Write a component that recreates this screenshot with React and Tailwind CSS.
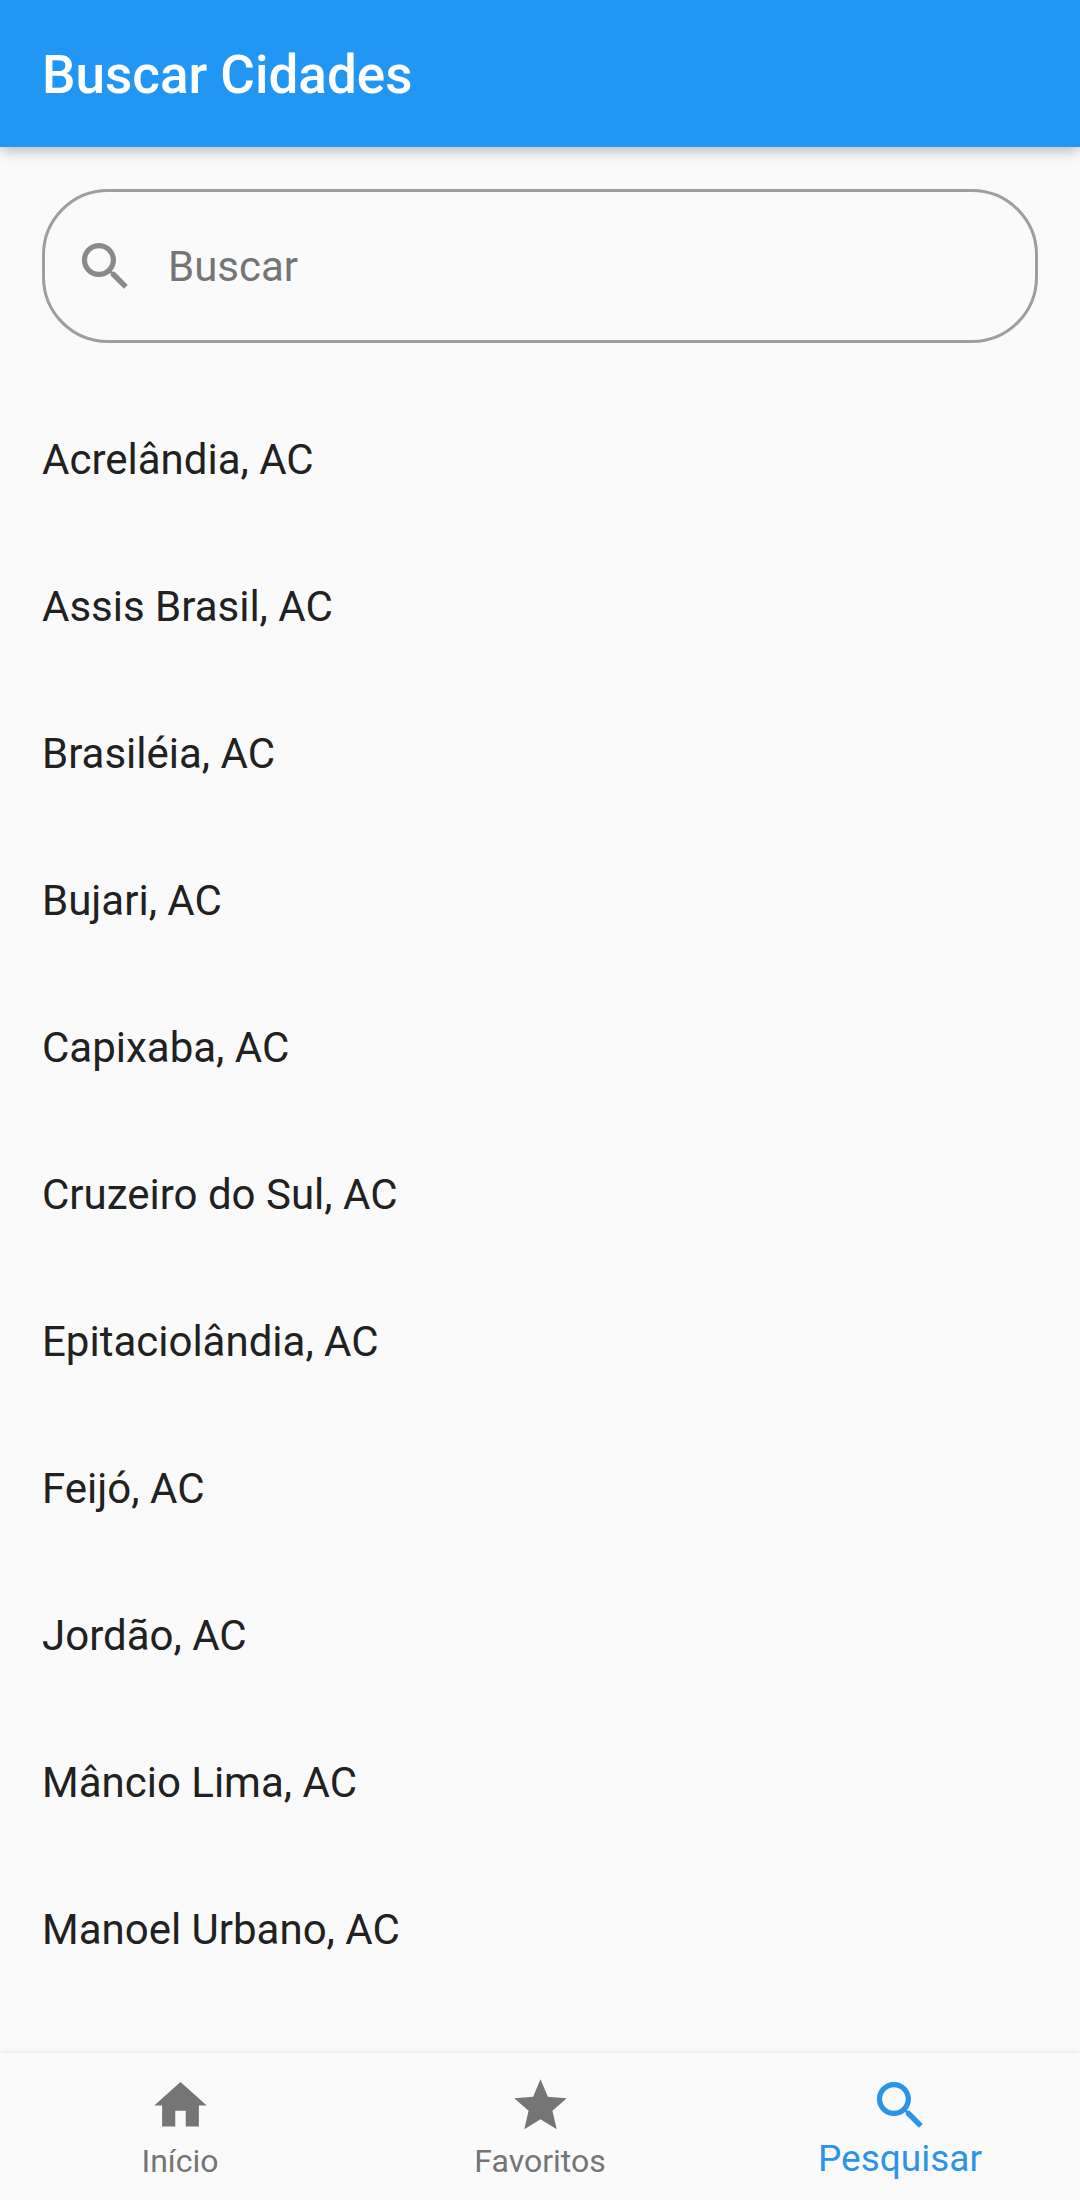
import React from "react";

const cities = [
  "Acrelândia, AC",
  "Assis Brasil, AC",
  "Brasiléia, AC",
  "Bujari, AC",
  "Capixaba, AC",
  "Cruzeiro do Sul, AC",
  "Epitaciolândia, AC",
  "Feijó, AC",
  "Jordão, AC",
  "Mâncio Lima, AC",
  "Manoel Urbano, AC",
];

const paths = {
  search:
    "M15.5 14h-.79l-.28-.27C15.41 12.59 16 11.11 16 9.5 16 5.91 13.09 3 9.5 3S3 5.91 3 9.5 5.91 16 9.5 16c1.61 0 3.09-.59 4.23-1.57l.27.28v.79l5 4.99L20.49 19l-4.99-5zm-6 0C7.01 14 5 11.99 5 9.5S7.01 5 9.5 5 14 7.01 14 9.5 11.99 14 9.5 14z",
  home: "M10 20v-6h4v6h5v-8h3L12 3 2 12h3v8z",
  star: "M12 17.27L18.18 21l-1.64-7.03L22 9.24l-7.19-.61L12 2 9.19 8.63 2 9.24l5.46 4.73L5.82 21z",
};

function Icon({ name, className }) {
  return (
    <svg viewBox="0 0 24 24" fill="currentColor" aria-hidden="true" className={className}>
      <path d={paths[name]} />
    </svg>
  );
}

function Tab({ icon, label, active }) {
  return (
    <button
      type="button"
      aria-current={active ? "page" : undefined}
      className={
        active
          ? "flex flex-1 flex-col items-center pt-[21px] text-[37px] leading-11 text-[#2b94e6]"
          : "flex flex-1 flex-col items-center pt-[21px] text-[32px] leading-12 text-[#757575]"
      }
    >
      <Icon name={icon} className="size-[63px]" />
      <span>{label}</span>
    </button>
  );
}

export default function App() {
  return (
    <div className="flex min-h-screen flex-col bg-[#fafafa] font-['Roboto',sans-serif] text-[#212121]">
      <header className="flex h-[147px] items-center bg-[#2196f3] px-[42px] pt-1 shadow-[0_4px_12px_rgba(0,0,0,0.25)]">
        <h1 className="text-[53px] font-medium text-white">Buscar Cidades</h1>
      </header>
      <main className="flex-1 pt-[42px]">
        <label className="mx-[42px] flex h-[154px] items-center rounded-[66px] border-3 border-[#9e9e9e] pl-[29px] text-[#8a8a8a]">
          <Icon name="search" className="size-[63px] shrink-0" />
          <input
            type="text"
            aria-label="Buscar"
            placeholder="Buscar"
            className="ml-[31px] min-w-0 flex-1 bg-transparent text-[42px] text-[#212121] outline-none placeholder:text-[#757575]"
          />
        </label>
        <ul className="pt-[43px]">
          {cities.map((city) => (
            <li key={city} className="flex h-[147px] items-center px-[42px] text-[42px]">
              {city}
            </li>
          ))}
        </ul>
      </main>
      <nav className="flex h-[147px] bg-[#fafafa] shadow-[0_-1px_6px_rgba(0,0,0,0.08)]">
        <Tab icon="home" label="Início" />
        <Tab icon="star" label="Favoritos" />
        <Tab icon="search" label="Pesquisar" active />
      </nav>
    </div>
  );
}
